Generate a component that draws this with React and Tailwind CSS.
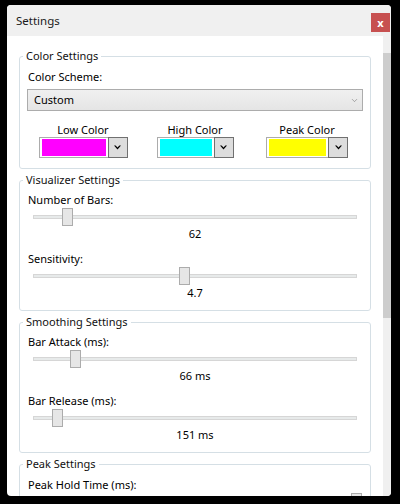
import { ChevronDown } from 'lucide-react'

const pickers = [
  { label: "Low Color", color: "bg-[#ff00ff]", width: "w-[89px]" },
  { label: "High Color", color: "bg-[#00ffff]", width: "w-[77px]" },
  { label: "Peak Color", color: "bg-[#ffff00]", width: "w-[82px]" },
]

const Legend = ({ children }) => (
  <legend className="-ml-[4px] px-[3px] leading-[16px] text-[#111]">{children}</legend>
)

const Arrow = () => (
  <svg width="7" height="5" viewBox="0 0 7 5">
    <path d="M0 0.5 L3.5 4.5 L7 0.5 L5.4 0.5 L3.5 2.6 L1.6 0.5 Z" fill="#000" />
  </svg>
)

const Slider = ({ label, value, thumb, spaced }) => (
  <div className={spaced ? "mt-[9px]" : ""}>
    <div className="leading-[16px] pl-px">{label}</div>
    <div className="relative h-[18px]">
      <div className="absolute left-[6px] right-[6px] top-[7px] h-[4px] bg-[#e7eaea] border border-[#d6d6d6]" />
      <div className="absolute top-0 w-[11px] h-[18px] border border-[#acacac] bg-[#e6e6e6]" style={{ left: thumb }} />
    </div>
    {value && <div className="leading-[16px] text-center">{value}</div>}
  </div>
)

const Picker = ({ label, color, width }) => (
  <div className="flex flex-col items-center">
    <div className="leading-[14px]">{label}</div>
    <div className={`flex h-[21px] ${width}`}>
      <div className="flex-1 border border-[#acacac] bg-white px-[2px] py-[1px]">
        <div className={`h-full ${color}`} />
      </div>
      <div className="w-[20px] -ml-px border border-[#707070] bg-[#dddddd] flex items-center justify-center">
        <Arrow />
      </div>
    </div>
  </div>
)

const App = () => {
  return (
    <div className="w-[400px] h-[504px] bg-black pt-[5px] pl-[7px] overflow-hidden font-['Segoe_UI','Noto_Sans',sans-serif] text-[11px] text-black">
      <div className="w-[384px] h-[491px] rounded-[4px] bg-white flex flex-col overflow-hidden">
        <div className="h-[31px] shrink-0 bg-[#f0f0f0] flex justify-between">
          <div className="pl-[9px] flex items-center text-[11.5px] text-[#1a1a1a]">Settings</div>
          <button className="mt-[8px] mr-px w-[19px] h-[19px] bg-[#c75050] text-white font-bold text-[11px] leading-[17px] flex items-center justify-center">x</button>
        </div>
        <div className="flex flex-1 min-h-0">
          <div className="w-[376px] px-[12px] pt-[12px] overflow-hidden">
            <fieldset className="border border-[#d5dfe5] rounded-[3px] px-[7px] pb-[10px]">
              <Legend>Color Settings</Legend>
              <div className="pt-[5px] leading-[16px] pl-px">Color Scheme:</div>
              <div className="mt-[4px] h-[22px] border border-[#acacac] bg-gradient-to-b from-[#f0f0f0] to-[#e5e5e5] flex items-center justify-between pl-[6px] pr-[3px]">
                <span>Custom</span>
                <ChevronDown size={9} strokeWidth={1.5} color="#707070" />
              </div>
              <div className="mt-[12px] grid grid-cols-3">
                {pickers.map((p) => (
                  <Picker key={p.label} {...p} />
                ))}
              </div>
            </fieldset>

            <fieldset className="mt-[3px] border border-[#d5dfe5] rounded-[3px] px-[7px] pt-[4px] pb-[9px]">
              <Legend>Visualizer Settings</Legend>
              <Slider label="Number of Bars:" value="62" thumb={35} />
              <Slider label="Sensitivity:" value="4.7" thumb={152} spaced />
            </fieldset>

            <fieldset className="mt-[3px] border border-[#d5dfe5] rounded-[3px] px-[7px] pt-[4px] pb-[9px]">
              <Legend>Smoothing Settings</Legend>
              <Slider label="Bar Attack (ms):" value="66 ms" thumb={43} />
              <Slider label="Bar Release (ms):" value="151 ms" thumb={25} spaced />
            </fieldset>

            <fieldset className="mt-[3px] border border-[#d5dfe5] rounded-[3px] px-[7px] pt-[5px] pb-[9px]">
              <Legend>Peak Settings</Legend>
              <Slider label="Peak Hold Time (ms):" thumb={324} />
            </fieldset>
          </div>
          <div className="w-[8px] bg-[#f0f0f0] pt-[17px]">
            <div className="h-[265px] bg-[#cdcdcd]" />
          </div>
        </div>
      </div>
    </div>
  )
}

export default App
